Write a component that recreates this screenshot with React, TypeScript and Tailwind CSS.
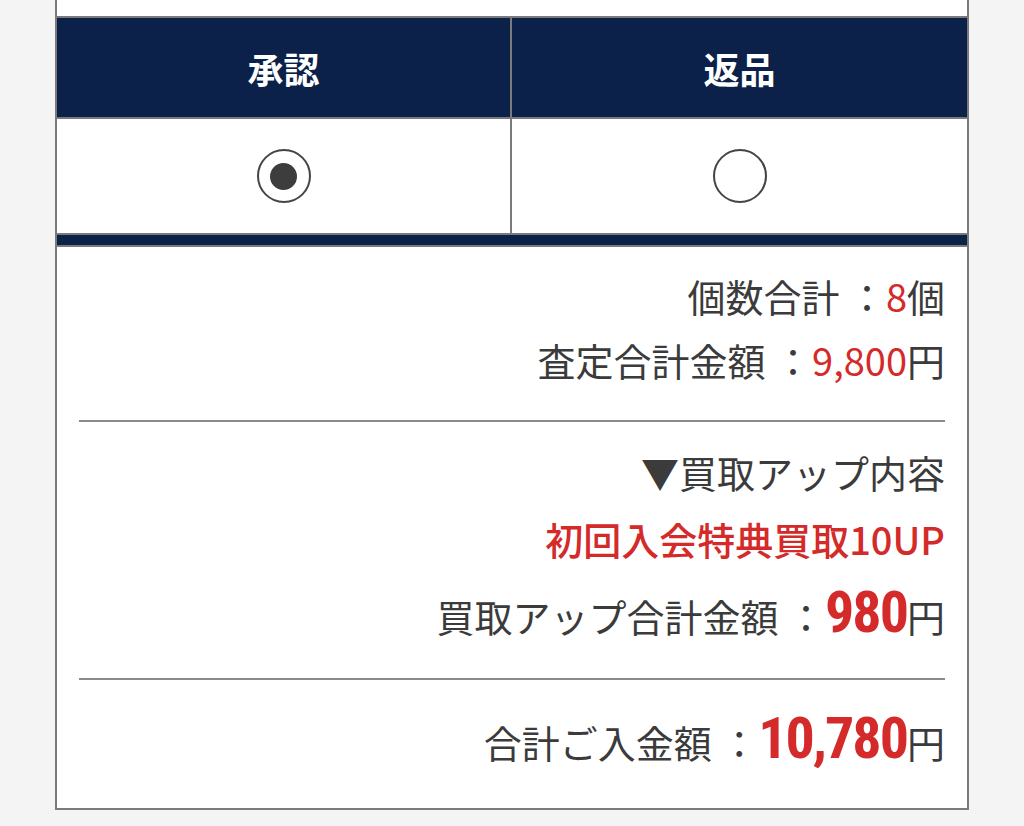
import React from 'react'

const NAVY = 'bg-[#0b2149]'

function Radio({ checked }: { checked: boolean }) {
  return (
    <div className="w-[54px] h-[54px] rounded-full border-2 border-[#444] bg-white flex items-center justify-center">
      {checked && <div className="w-[27px] h-[27px] rounded-full bg-[#3d3d3d]" />}
    </div>
  )
}

function Big({ children }: { children: React.ReactNode }) {
  return (
    <span className="font-['Roboto','Noto_Sans',sans-serif] font-bold font-stretch-condensed tracking-[-2px] text-[58px] text-[#d42a2a]">
      {children}
    </span>
  )
}

export default function App() {
  return (
    <div className="min-h-screen bg-[#f4f4f4] font-['Noto_Sans_CJK_JP',sans-serif] text-[#3b3b3b]">
      <div className="mx-[55px] bg-white border-2 border-t-0 border-[#7a7a7a]">
        <div className="h-[16px]" />

        {/* 承認 / 返品 */}
        <div className="grid grid-cols-2 border-t-2 border-[#7a7a7a]">
          <div className={`${NAVY} h-[99px] flex items-center justify-center border-r-2 border-[#7a7a7a] text-white font-bold text-[36px]`}>
            承認
          </div>
          <div className={`${NAVY} h-[99px] flex items-center justify-center text-white font-bold text-[36px]`}>
            返品
          </div>
          <div className="h-[116px] flex items-center justify-center border-t-2 border-r-2 border-[#7a7a7a]">
            <Radio checked />
          </div>
          <div className="h-[116px] flex items-center justify-center border-t-2 border-[#7a7a7a]">
            <Radio checked={false} />
          </div>
        </div>
        <div className={`${NAVY} h-[14px] border-y-2 border-[#7a7a7a]`} />

        <div className="px-[22px]">
          <div className="pt-[17px] pb-[28px] border-b-2 border-[#8a8a8a] text-right text-[38px] leading-[64px]">
            <p>
              個数合計 ：<span className="text-[#d42a2a]">8</span>個
            </p>
            <p>
              査定合計金額 ：<span className="text-[#d42a2a]">9,800</span>円
            </p>
          </div>

          <div className="pt-[16px] pb-[22px] border-b-2 border-[#8a8a8a] text-right text-[38px] leading-[67px]">
            <p>▼買取アップ内容</p>
            <p className="text-[#d42a2a] font-medium">初回入会特典買取10UP</p>
            <p className="leading-[80px]">
              買取アップ合計金額 ：<Big>980</Big>円
            </p>
          </div>

          <div className="pt-[18px] pb-[26px] text-right text-[38px] leading-[80px]">
            <p>
              合計ご入金額 ：<Big>10,780</Big>円
            </p>
          </div>
        </div>
      </div>
    </div>
  )
}
